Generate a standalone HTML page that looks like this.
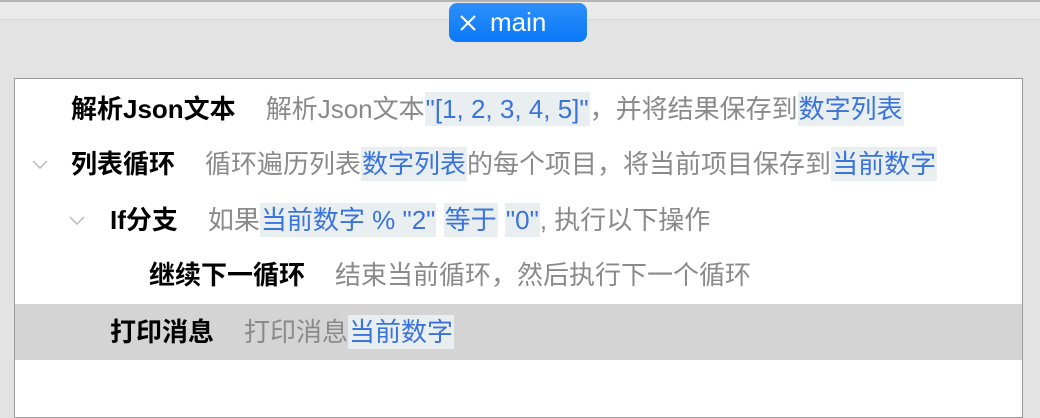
<html><head><style>
body{margin:0;width:1040px;height:408px;background:#e3e3e3;position:relative;overflow:hidden;font-family:"Liberation Sans","Noto Sans CJK SC",sans-serif}
.top{position:absolute;left:0;top:0;width:1040px;height:20px;background:#ebebeb;border-top:2px solid #b4b4b4;border-bottom:1px solid #d8d8d8;box-sizing:border-box}
.tab{position:absolute;left:449px;top:3px;width:138px;height:39px;background:linear-gradient(#2d8ffb,#0a78f7);border-radius:8px;color:#fff;font-size:26px;line-height:39px}
.tab span{position:absolute;left:41px;top:0}
.panel{position:absolute;left:14px;top:78px;width:1009px;height:340px;background:#fff;border:1px solid #9a9a9a;box-sizing:border-box}
.row{position:absolute;left:0;width:1007px;height:56px;line-height:56px;font-size:26px;white-space:nowrap}
.row.sel{background:#d4d4d4}
b{color:#000;font-weight:bold;margin-right:30px}
.g{color:#8a8a8a}
.t{color:#3a74db;background:#e9eef1;padding:0 1px;line-height:34px;display:inline-block}
.chev{position:absolute}
</style></head><body>
<div class="top"></div>
<div class="tab"><svg style="position:absolute;left:10px;top:11px" width="18" height="18"><path d="M2 2L16 16M16 2L2 16" stroke="#fff" stroke-width="2"/></svg><span>main</span></div>
<div class="panel">
<div class="row" style="top:2px"><span style="position:absolute;left:56px"><b>解析Json文本</b><span class="g">解析Json文本</span><span class="t">"[1, 2, 3, 4, 5]"</span><span class="g">，并将结果保存到</span><span class="t">数字列表</span></span></div>
<div class="row" style="top:57px"><svg class="chev" style="left:17px;top:23px" width="16" height="10"><path d="M1 2L8 9L15 2" stroke="#bbb" stroke-width="1.5" fill="none"/></svg><span style="position:absolute;left:56px"><b>列表循环</b><span class="g">循环遍历列表</span><span class="t">数字列表</span><span class="g">的每个项目，将当前项目保存到</span><span class="t">当前数字</span></span></div>
<div class="row" style="top:113px"><svg class="chev" style="left:54px;top:23px" width="16" height="10"><path d="M1 2L8 9L15 2" stroke="#bbb" stroke-width="1.5" fill="none"/></svg><span style="position:absolute;left:95px"><b>If分支</b><span class="g">如果</span><span class="t">当前数字 % "2"</span> <span class="t">等于</span> <span class="t">"0"</span><span class="g">, 执行以下操作</span></span></div>
<div class="row" style="top:168px"><span style="position:absolute;left:134px"><b>继续下一循环</b><span class="g">结束当前循环，然后执行下一个循环</span></span></div>
<div class="row sel" style="top:225px"><span style="position:absolute;left:95px"><b>打印消息</b><span class="g">打印消息</span><span class="t">当前数字</span></span></div>
</div>
</body></html>
